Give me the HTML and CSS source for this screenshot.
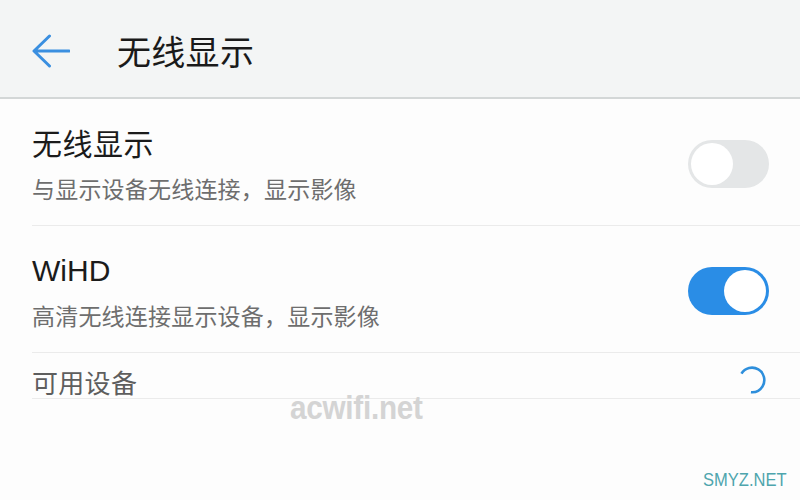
FILE: index.html
```html
<!DOCTYPE html>
<html lang="zh-CN">
<head>
<meta charset="utf-8">
<title>无线显示</title>
<link rel="stylesheet" href="styles.css">
</head>
<body>
<div class="screen">
  <header class="appbar">
    <svg class="back" width="38" height="34" viewBox="0 0 38 34">
      <path d="M37 17 H2.5 M17.5 2 L2 17 L17.5 32" fill="none" stroke="#3a8fe0" stroke-width="3" stroke-linecap="round" stroke-linejoin="round"/>
    </svg>
    <h1 class="appbar-title">无线显示</h1>
  </header>

  <section class="list">
    <div class="row">
      <div class="text">
        <div class="title">无线显示</div>
        <div class="subtitle">与显示设备无线连接，显示影像</div>
      </div>
      <div class="switch"><span class="knob"></span></div>
    </div>

    <div class="row">
      <div class="text">
        <div class="title latin"><span class="latin-text">WiHD</span></div>
        <div class="subtitle">高清无线连接显示设备，显示影像</div>
      </div>
      <div class="switch on"><span class="knob"></span></div>
    </div>

    <div class="row section">
      <div class="section-title">可用设备</div>
      <svg class="spinner" width="28" height="28" viewBox="0 0 28 28">
        <circle cx="14" cy="14" r="12.3" fill="none" stroke="#2e8fdc" stroke-width="2.6" stroke-dasharray="52 26" transform="rotate(211 14 14)"/>
      </svg>
    </div>
  </section>

  <div class="wm-acwifi">acwifi.net</div>
  <div class="wm-smyz">SMYZ.NET</div>
</div>
</body>
</html>
```

FILE: styles.css
```css
* { box-sizing: border-box; }

html, body {
  margin: 0;
  padding: 0;
  background: #fdfdfd;
}

body {
  font-family: "Noto Sans CJK SC", "Liberation Sans", sans-serif;
  width: 800px;
  height: 500px;
  overflow: hidden;
}

.screen {
  position: relative;
  width: 800px;
  height: 500px;
}

.appbar {
  height: 99px;
  background: #f3f5f5;
  border-bottom: 2px solid #d3d7d7;
  display: flex;
  align-items: center;
  padding: 4px 0 0 32px;
}

.back {
  display: block;
  flex: none;
}

.appbar-title {
  margin: 0 0 0 47px;
  font-size: 34px;
  font-weight: 400;
  line-height: 40px;
  letter-spacing: 0.3px;
  color: #1a1a1a;
}

.list {
  display: flex;
  flex-direction: column;
}

.row {
  margin-left: 32px;
  padding: 25px 31px 22px 0;
  border-bottom: 1px solid #ebebeb;
  display: flex;
  align-items: center;
  justify-content: space-between;
}

.text {
  display: flex;
  flex-direction: column;
}

.title {
  font-size: 30px;
  line-height: 36px;
  letter-spacing: 0.5px;
  color: #1b1b1b;
}

.title.latin {
  font-family: "Liberation Sans", "Noto Sans CJK SC", sans-serif;
  letter-spacing: 0;
}

.latin-text {
  line-height: 30px;
  vertical-align: -2px;
}

.subtitle {
  margin-top: 13px;
  font-size: 23px;
  line-height: 30px;
  letter-spacing: 0.2px;
  color: #6e6e6e;
}

.switch {
  flex: none;
  width: 81px;
  height: 48px;
  border-radius: 24px;
  background: #e4e6e7;
  padding: 3px;
  display: flex;
  justify-content: flex-start;
}

.switch.on {
  background: #2a8de6;
  justify-content: flex-end;
}

.knob {
  width: 42px;
  height: 42px;
  border-radius: 50%;
  background: #ffffff;
}

.row.section {
  padding: 13px 34px 0 0;
  align-items: flex-start;
}

.section-title {
  font-size: 26px;
  line-height: 32px;
  letter-spacing: 0.3px;
  color: #5e5e5e;
}

.spinner {
  display: block;
  flex: none;
}

.wm-acwifi {
  position: absolute;
  left: 290px;
  top: 390px;
  font-family: "Liberation Sans", sans-serif;
  font-weight: 700;
  font-size: 33px;
  line-height: 36px;
  color: #d4d4d4;
  transform: scaleX(0.9);
  transform-origin: left center;
  letter-spacing: -0.3px;
}

.wm-smyz {
  position: absolute;
  left: 703px;
  top: 469px;
  font-family: "Liberation Sans", sans-serif;
  font-size: 19px;
  line-height: 22px;
  color: #4ea5ad;
  transform: scaleX(0.87);
  transform-origin: left center;
}
```
